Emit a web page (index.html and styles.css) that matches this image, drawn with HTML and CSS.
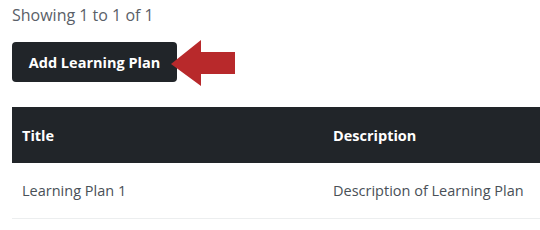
FILE: index.html
```html
<!DOCTYPE html>
<html lang="en">
<head>
    <meta charset="UTF-8">
    <title>Learning Plans</title>
    <link rel="stylesheet" href="styles.css">
</head>
<body>

    <!-- 목록 요약 -->
    <p class="count">Showing 1 to 1 of 1</p>

    <div class="actions">
        <button class="add-btn">Add Learning Plan</button>
        <svg class="arrow" width="64" height="46" viewBox="0 0 64 46">
            <polygon points="0,24 30,0 30,12 64,12 64,34 30,34 30,46" fill="#b8292b"/>
        </svg>
    </div>

    <table class="plans">
        <thead>
            <tr>
                <th class="col-title">Title</th>
                <th>Description</th>
            </tr>
        </thead>
        <tbody>
            <tr>
                <td>Learning Plan 1</td>
                <td>Description of Learning Plan</td>
            </tr>
        </tbody>
    </table>

</body>
</html>
```

FILE: styles.css
```css
body
{
    margin: 0; padding: 0 0 0 12px; overflow: hidden;
    font-family: "Open Sans", "Liberation Sans", sans-serif; color: #495057;
}

.count { margin: 4px 0 0 0; font-size: 16px; line-height: 22px; color: #5a6068; }

.actions { display: flex; align-items: center; height: 40px; margin-top: 16px; }

.add-btn
{
    background-color: #212529; color: white; border: none;
    border-radius: 4px; width: 165px; height: 40px; flex-shrink: 0;
    font-family: inherit; font-size: 14.5px; font-weight: bold;
}

.arrow { margin-left: -6px; margin-top: 2px; flex-shrink: 0; }

.plans
{
    width: 720px; border-collapse: collapse; margin-top: 25px;
}

.plans th
{
    background-color: #212529; color: white; text-align: left;
    font-size: 14.5px; height: 56px; padding: 0 10px;
}

.plans .col-title { width: 291px; }

.plans td
{
    height: 55px; padding: 0 10px; font-size: 14.5px;
    border-bottom: 1px solid #eceeef;
}
```
